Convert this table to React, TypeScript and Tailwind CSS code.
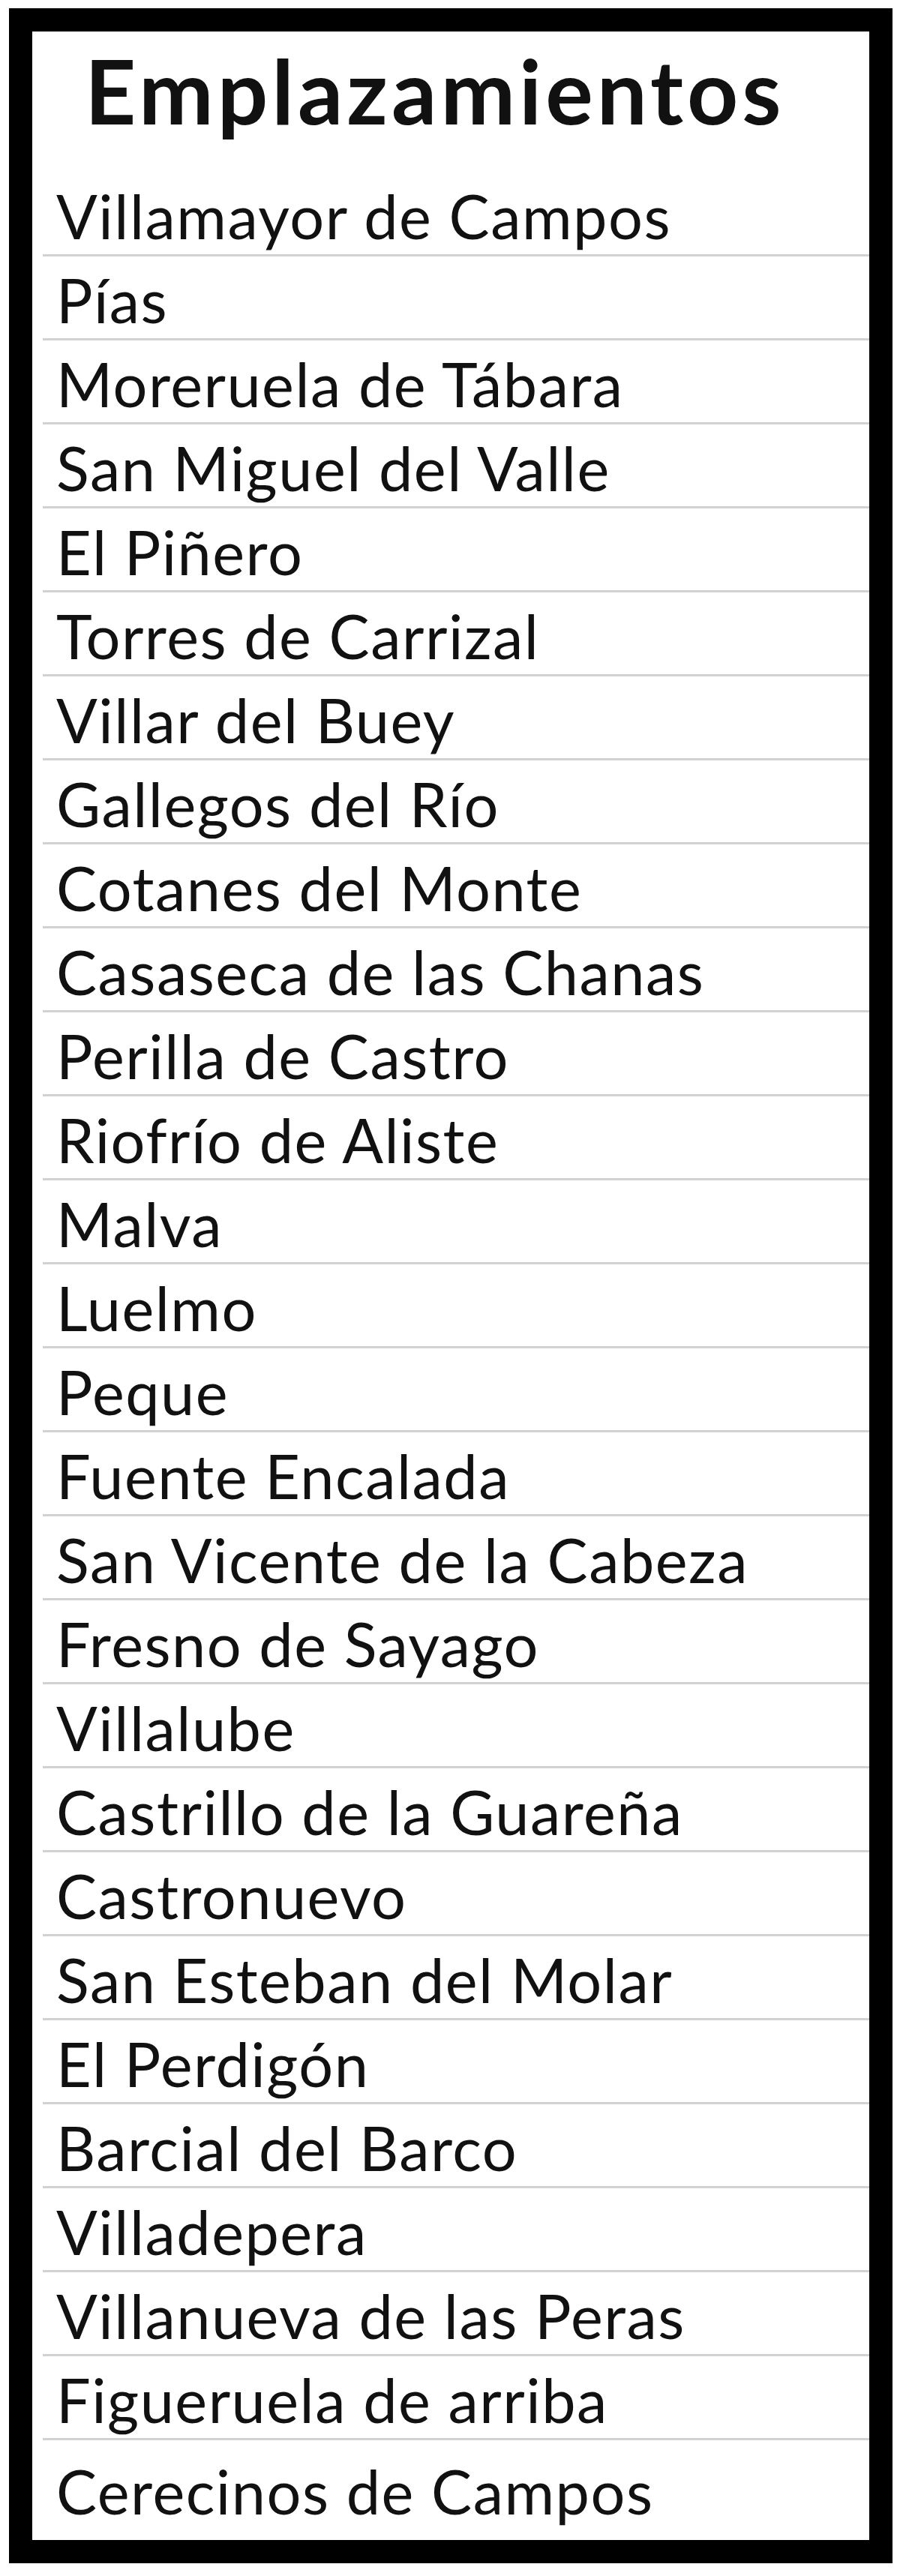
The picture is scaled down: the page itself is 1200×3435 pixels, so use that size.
import React from 'react';

const places = [
    'Villamayor de Campos',
    'Pías',
    'Moreruela de Tábara',
    'San Miguel del Valle',
    'El Piñero',
    'Torres de Carrizal',
    'Villar del Buey',
    'Gallegos del Río',
    'Cotanes del Monte',
    'Casaseca de las Chanas',
    'Perilla de Castro',
    'Riofrío de Aliste',
    'Malva',
    'Luelmo',
    'Peque',
    'Fuente Encalada',
    'San Vicente de la Cabeza',
    'Fresno de Sayago',
    'Villalube',
    'Castrillo de la Guareña',
    'Castronuevo',
    'San Esteban del Molar',
    'El Perdigón',
    'Barcial del Barco',
    'Villadepera',
    'Villanueva de las Peras',
    'Figueruela de arriba',
    'Cerecinos de Campos',
];

const App: React.FC = () => {
    return (
        <div className="w-[1200px] h-[3435px] bg-white pt-[11px] pl-[12px] font-['Lato',sans-serif] text-[#111]">
            <div className="w-[1178px] h-[3407px] border-[31px] border-black bg-white flex flex-col">
                {/* Title */}
                <div className="h-[188px] shrink-0 pt-[19px] pl-[70px]">
                    <h1 className="text-[119px] font-bold leading-none tracking-[5px]">Emplazamientos</h1>
                </div>

                {/* Rows */}
                {places.map((name, idx) => {
                    const last = idx === places.length - 1;
                    return (
                        <div
                            key={idx}
                            className={
                                last
                                    ? 'flex-1 ml-[14px] pl-[18px] pt-[27px]'
                                    : 'h-[112px] shrink-0 ml-[14px] pl-[18px] border-b-[3px] border-[#d2d2d2] flex items-end pb-[11px]'
                            }
                        >
                            <span className="text-[81px] leading-none tracking-[1.5px]">{name}</span>
                        </div>
                    );
                })}
            </div>
        </div>
    );
};

export default App;
